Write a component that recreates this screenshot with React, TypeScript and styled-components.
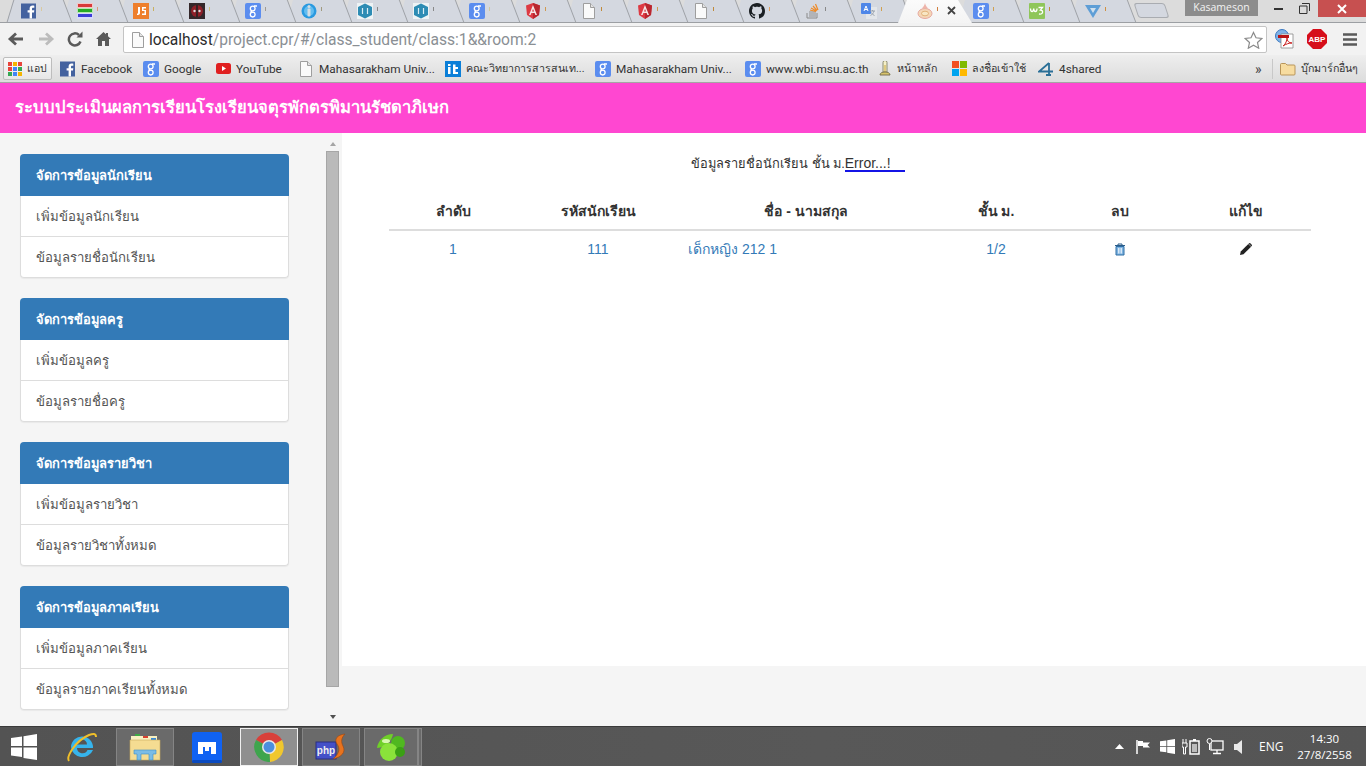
import React from "react";
import styled, { createGlobalStyle } from "styled-components";

const Global = createGlobalStyle`
  html, body { margin: 0; padding: 0; background: #fff; overflow: hidden; }
  * { box-sizing: border-box; }
  body { font-family: "Liberation Sans", "Noto Sans", "DejaVu Sans", sans-serif; }
`;

const Page = styled.div`
  width: 1366px; height: 766px; display: flex; flex-direction: column; overflow: hidden; position: relative;
`;

/* ---------- tab strip ---------- */
const TabRow = styled.div`
  height: 23px; flex: none; display: flex; padding-left: 7px; background: #dcdcdc;
  border-bottom: 1px solid #9c9fa3; position: relative;
`;
const Tab = styled.div<{ $active?: boolean }>`
  width: 56px; height: 23px; flex: none; position: relative; display: flex; align-items: flex-start; padding: 3px 0 0 14px;
  &::before {
    content: ""; position: absolute; left: ${p => (p.$active ? "-5px" : "0")}; top: 0; height: ${p => (p.$active ? "23px" : "22px")};
    width: ${p => (p.$active ? "74px" : "65px")};
    background: ${p => (p.$active ? "linear-gradient(#fbfbfb,#f4f4f4)" : "#d4d8e0")};
    clip-path: ${p => (p.$active ? "polygon(9px 0, 60px 0, 74px 100%, 0 100%)" : "polygon(6px 0, 56px 0, 65px 100%, 0 100%)")};
    z-index: ${p => (p.$active ? 3 : 0)};
  }
  &::after {
    content: ""; display: ${p => (p.$active ? "none" : "block")}; position: absolute; left: 60px; top: 0; width: 1px; height: 22px;
    background: #9ea1a6; transform: skewX(21deg); z-index: 2;
  }
`;
const TabFav = styled.span`
  width: 16px; height: 16px; display: flex; position: relative; z-index: 4; flex: none;
`;
const TabTick = styled.span<{ $c: string }>`
  width: 1px; height: 4px; margin: 4px 0 0 4px; background: ${p => p.$c}; position: relative; z-index: 4; flex: none;
`;
const TabClose = styled.span`
  position: absolute; left: 44px; top: 6px; z-index: 4; width: 9px; height: 9px; display: flex;
`;
const FirstSlant = styled.span`
  position: absolute; left: 10px; top: 0; width: 1px; height: 22px; background: #9ea1a6; transform: skewX(-17deg); z-index: 2;
`;
const NewTab = styled.div`
  width: 31px; height: 15px; margin: 3px 0 0 9px; flex: none; background: #d4d8e0; border: 1px solid #a9acb1; border-radius: 3px;
  transform: skewX(18deg); position: relative; z-index: 1;
`;
const WindowSpace = styled.div` flex: 1; `;
const UserBadge = styled.div`
  width: 73px; height: 16px; background: #8c8c8c; color: #f2f2f2; font: 10.5px/15px "Open Sans", sans-serif; text-align: center; flex: none;
`;
const WinBtn = styled.div<{ $w: number; $red?: boolean; $pr?: number }>`
  width: ${p => p.$w}px; height: 17px; padding-right: ${p => p.$pr ?? 0}px; background: ${p => (p.$red ? "#c75050" : "transparent")}; display: flex; align-items: center; justify-content: center; flex: none;
`;

/* ---------- toolbar ---------- */
const Toolbar = styled.div`
  height: 32px; flex: none; background: #f2f2f2; display: flex; align-items: center; position: relative;
`;
const NavBtn = styled.div<{ $w: number }>`
  width: ${p => p.$w}px; display: flex; justify-content: center; align-items: center; flex: none;
`;
const Omnibox = styled.div`
  width: 1144px; height: 27px; margin: 1px 0 0 7px; background: #fff; border: 1px solid #c4c4c4; border-radius: 2px; flex: none;
  display: flex; align-items: center; padding: 0 3px 0 6px; 
`;
const Url = styled.div`
  flex: 1; margin-left: 3px; font: 15.6px "Roboto", sans-serif; color: #8a8f94; white-space: nowrap;
  b { font-weight: 400; color: #2c2c2c; }
`;

/* ---------- bookmarks ---------- */
const Bookmarks = styled.div`
  height: 28px; flex: none; display: flex; align-items: center; padding-left: 3px; position: relative;
  background: linear-gradient(#eeeeee, #dcdcdc); border-bottom: 1px solid #a5a5a5; font: 11.8px "Roboto", "Noto Sans", sans-serif; color: #333;
`;
const AppsBtn = styled.div`
  width: 49px; height: 23px; border: 1px solid #bdbdbd; border-radius: 2px; background: linear-gradient(#fafafa,#e6e6e6);
  display: flex; align-items: center; gap: 5px; padding-left: 4px; flex: none; margin-right: 8px; font-size: 10.5px;
`;
const Mark = styled.div<{ $w: number; $thai?: boolean }>`
  width: ${p => p.$w}px; display: flex; align-items: center; gap: 5px; flex: none; white-space: nowrap; overflow: hidden;
  font-size: ${p => (p.$thai ? "10.7px" : "inherit")};
`;
const ChevronMore = styled.div`
  margin-left: auto; width: 16px; padding-left: 4px; font-size: 14px; color: #444; flex: none;
`;
const BarSep = styled.div` width: 1px; height: 20px; background: #c8c8c8; flex: none; margin: 0 7px 0 5px; `;

/* ---------- app bar ---------- */
const AppBar = styled.header`
  height: 50px; flex: none; background: #ff47d1; color: #fff; font-size: 16.6px; font-weight: 700; line-height: 50px; padding-left: 15px;
`;

/* ---------- body ---------- */
const Body = styled.div` flex: 1; display: flex; min-height: 0; `;
const Sidebar = styled.aside`
  width: 342px; flex: none; background: #f5f5f5; display: flex;
`;
const Panels = styled.div`
  width: 323px; flex: none; padding: 21px 34px 0 20px; display: flex; flex-direction: column; gap: 20px;
`;
const Panel = styled.section`
  width: 269px; border-radius: 4px; box-shadow: 0 1px 1px rgba(0,0,0,.05);
`;
const PanelHead = styled.div`
  height: 42px; background: #337ab7; color: #fff; font-size: 12.9px; font-weight: 700; line-height: 44px; padding-left: 16px; border-radius: 4px 4px 0 0;
`;
const PanelList = styled.div`
  border: 1px solid #ddd; border-top: 0; border-radius: 0 0 4px 4px; background: #fff;
`;
const PanelItem = styled.div`
  height: 40px; padding-left: 15px; font-size: 13.2px; line-height: 42px; color: #555;
  & + & { border-top: 1px solid #ddd; height: 41px; }
`;
const Scroll = styled.div`
  width: 19px; flex: none; display: flex; flex-direction: column; align-items: center;
`;
const ScrollArrowUp = styled.div`
  width: 0; height: 0; margin: 9px 0 5px; border-left: 3.5px solid transparent; border-right: 3.5px solid transparent; border-bottom: 4px solid #a5a5a5;
`;
const ScrollArrowDown = styled.div`
  width: 0; height: 0; margin: 28px 0 0; border-left: 3.5px solid transparent; border-right: 3.5px solid transparent; border-top: 4px solid #505050;
`;
const Thumb = styled.div`
  width: 13px; height: 536px; background: #bababa; border: 1px solid #a6a6a6; flex: none;
`;
const Main = styled.main` flex: 1; display: flex; flex-direction: column; background: #f5f5f5; `;
const Content = styled.div`
  height: 533px; flex: none; background: #fff; padding: 22px 55px 0 47px;
`;
const Title = styled.h4`
  margin: 0 0 28px; padding-left: 302px; font-size: 12.85px; font-weight: 400; line-height: 18px; color: #333; white-space: pre;
  u { font-size: 14px; text-decoration: none; border-bottom: 2px solid #1414e6; display: inline-block; width: 60px; line-height: 16px; height: 17px; }
`;
const Table = styled.table`
  width: 922px; border-collapse: collapse; table-layout: fixed; font-size: 14px; color: #337ab7;
`;
const Th = styled.th<{ $w: number }>`
  width: ${p => p.$w}px; height: 28px; padding: 0 0 8px; border-bottom: 2px solid #ddd; text-align: center; color: #333; font-size: 14px; font-weight: 700; line-height: 20px;
`;
const Td = styled.td<{ $left?: boolean }>`
  height: 37px; padding: 0 ${p => (p.$left ? "0 0 9px" : "0")}; text-align: ${p => (p.$left ? "left" : "center")}; vertical-align: middle;
  svg { display: block; margin: 0 auto; }
`;

/* ---------- taskbar ---------- */
const Taskbar = styled.footer`
  height: 40px; flex: none; background: linear-gradient(90deg, #535353, #585858 60%, #555); border-top: 1px solid #3a3a3a; display: flex; align-items: stretch; color: #fff;
`;
const TaskSlot = styled.div<{ $w: number; $ml?: number; $box?: boolean; $on?: boolean }>`
  width: ${p => p.$w}px; margin-left: ${p => p.$ml ?? 0}px; margin-top: 1px; flex: none; display: flex; align-items: center; justify-content: center;
  ${p => p.$box && `border: 1px solid ${p.$on ? "#f0f0f0" : "#858585"}; background: ${p.$on ? "#8f8f8f" : "#6a6a6a"};`}
`;
const Tray = styled.div`
  margin-left: auto; display: flex; align-items: center; font: 12px "Open Sans", sans-serif;
`;
const TrayIcon = styled.div<{ $w: number }>`
  width: ${p => p.$w}px; display: flex; justify-content: center; flex: none;
`;
const Clock = styled.div`
  width: 83px; text-align: center; line-height: 16px; font-size: 11.5px; flex: none;
`;
const Lang = styled.div` width: 24px; margin-left: 8px; text-align: center; flex: none; `;

/* ---------- icons ---------- */
const Fb = () => (<svg width="16" height="16" viewBox="0 0 16 16"><rect width="15" height="15" y=".5" fill="#44629f" /><path d="M11 15.5V9.6h2l.3-2.300H11V5.9c0-.7.3-1.100 1.100-1.100h1.200V2.700c-.5-.1-1-.1-1.700-.1-1.800 0-3 1-3 3v1.700h-2v2.300h2v5.900z" fill="#fff" /></svg>);
const G = () => (<svg width="16" height="16" viewBox="0 0 16 16"><rect width="16" height="16" rx="2" fill="#5b8def" /><g fill="none" stroke="#fff" strokeWidth="1.3"><circle cx="7.7" cy="5.500" r="2.400" /><circle cx="7.7" cy="11.6" r="2.400" /><path d="M9 3h3M7 8c-2 1-1 1.500 .7 1.300" /></g></svg>);
const Html5 = () => (<svg width="16" height="16" viewBox="0 0 16 16"><rect width="16" height="16" fill="#ee7f2d" /><path d="M5 4h2v6c0 1.500-1 2-3 2v-1.300c.7 0 1-.3 1-.9zM13 4H9v4h2.500v2.500H9V12h4V7h-2.500V5.500H13z" fill="#fff" /></svg>);
const MeaFree = () => (<svg width="16" height="16" viewBox="0 0 16 16"><rect width="16" height="5" fill="#f4c7c7" /><rect y="5" width="16" height="5" fill="#b8e8b0" /><rect y="10" width="16" height="6" fill="#d7d9fb" /><rect x="1" y="1" width="14" height="3" fill="#d83a3a" /><rect x="1" y="6" width="14" height="3" fill="#27a827" /><rect x="1" y="11" width="14" height="3" fill="#3d3dd8" /></svg>);
const Dead = () => (<svg width="16" height="16" viewBox="0 0 16 16"><rect width="16" height="16" fill="#33272a" /><circle cx="8" cy="8" r="6" fill="#8e1f28" /><path d="M8 2v12" stroke="#222" strokeWidth="1.6" /><circle cx="5.5" cy="8" r="1.2" fill="#ddd" /><circle cx="10.5" cy="8" r="1.2" fill="#ddd" /></svg>);
const InfoFav = () => (<svg width="16" height="16" viewBox="0 0 16 16"><circle cx="8" cy="8" r="7.5" fill="#2a9ae0" /><circle cx="8" cy="8" r="5" fill="#63bdf0" /><rect x="6.5" y="5.5" width="3" height="8" rx="1" fill="#d5dde2" /><circle cx="8" cy="3.5" r="1.5" fill="#d5dde2" /></svg>);
const Hex = () => (<svg width="16" height="16" viewBox="0 0 16 16"><rect width="16" height="16" fill="#eef3f5" /><path d="M8 .5 15 4v8l-7 3.500L1 12V4z" fill="#2d8cb4" /><path d="M5.5 5v6M10.5 5v6" stroke="#d9edf5" strokeWidth="1.2" /></svg>);
const Ang = () => (<svg width="16" height="16" viewBox="0 0 16 16"><path d="M8 0 15 2.500 14 12 8 16 2 12 1 2.500z" fill="#dd3a43" /><path d="M8 0 15 2.500 14 12 8 16z" fill="#b9272f" /><path d="M8 2 4 12h1.600l.8-2h3.200l.8 2H12zM7 8.500 8 6l1 2.500z" fill="#f6e4e4" /></svg>);
const Doc = () => (<svg width="16" height="16" viewBox="0 0 16 16"><path d="M2.500 .5h7l4 4v11h-11z" fill="#fafafa" stroke="#9e9e9e" /><path d="M9.500 .5v4h4" fill="#e4e4e4" stroke="#9e9e9e" /></svg>);
const Octo = () => (<svg width="16" height="16" viewBox="0 0 16 16"><path fill="#1b1f23" d="M8 0C3.580 0 0 3.580 0 8c0 3.540 2.290 6.530 5.470 7.590.4.070.55-.17.55-.38 0-.19-.01-.82-.01-1.490-2.010.37-2.530-.49-2.690-.94-.09-.23-.48-.94-.82-1.130-.28-.15-.68-.52-.01-.53.63-.01 1.080.58 1.230.82.720 1.210 1.870.870 2.330.660.070-.520.280-.870.510-1.070-1.780-.200-3.640-.890-3.640-3.950 0-.870.310-1.590.820-2.150-.080-.200-.360-1.020.080-2.120 0 0 .670-.210 2.200.820.640-.180 1.320-.270 2-.270s1.360.090 2 .270c1.530-1.040 2.200-.820 2.200-.820.440 1.100.160 1.920.080 2.120.510.560.820 1.270.820 2.150 0 3.070-1.870 3.750-3.650 3.950.290.250.540.730.540 1.480 0 1.070-.010 1.930-.010 2.200 0 .210.150.460.550.380A8.010 8.010 0 0 0 16 8c0-4.420-3.580-8-8-8z" /></svg>);
const Stack = () => (<svg width="16" height="16" viewBox="0 0 16 16"><path d="M2 10v5h10v-5" fill="none" stroke="#8a8a8a" /><path d="M4 9h7M4 11h7M4 13h7" stroke="#8f8f8f" /><path d="M5 7l6 1.500M6 5l5.500 3M8 3l4 4.500M10.500 1l2.500 6" stroke="#ef8a26" strokeWidth="1.2" /></svg>);
const Translate = () => (<svg width="16" height="16" viewBox="0 0 16 16"><rect x="5" y="4" width="11" height="12" fill="#e3e6ea" /><rect width="10" height="11" rx="1" fill="#4e86e8" /><path d="M3 8 5 3l2 5M3.800 6.500h2.400" stroke="#fff" fill="none" /><path d="M9 8h5M11.500 7v1M13 8c-.5 2-2 4-3.500 4.500M10.500 9.500c.5 1.500 2 2.500 3 3" stroke="#9aa2ad" fill="none" /></svg>);
const Onion = () => (<svg width="16" height="16" viewBox="0 0 16 16"><ellipse cx="8" cy="10.5" rx="7" ry="5" fill="#f4d6b6" stroke="#e6a8a0" /><ellipse cx="8" cy="10.5" rx="3.5" ry="2.3" fill="#f8e6c4" stroke="#d8a060" strokeWidth=".7" /><path d="M8 0c-.5 3-2 3.500-3 5.500h6C10 3.500 8.500 3 8 0z" fill="#eeb4aa" /></svg>);
const W3 = () => (<svg width="16" height="16" viewBox="0 0 16 16"><rect width="16" height="16" rx="1" fill="#8fc65a" /><path d="M1.500 5.500c0 4 3 4 3.200 0 .2 4 3.300 4 3.300 0M9.500 4.500h4l-2 2.500c3 0 3 5-1.500 4" fill="none" stroke="#fff" strokeWidth="1.3" /></svg>);
const Vee = () => (<svg width="16" height="16" viewBox="0 0 16 16"><path d="M0 2h16L8 15z" fill="#5e9ed6" /><path d="M5 5h6L8 10z" fill="#cfe0ee" /></svg>);
const YouT = () => (<svg width="15" height="11" viewBox="0 0 15 11"><rect width="15" height="11" rx="2.5" fill="#e02020" /><path d="M6 3l4 2.500L6 8z" fill="#fff" /></svg>);
const It = () => (<svg width="16" height="16" viewBox="0 0 16 16"><rect width="16" height="16" fill="#0b7fd8" /><path d="M3 6h2.500v7H3zM3 3h2.500v2H3zM8 3.500h2.500V6H13v2h-2.500v3H13v2H8z" fill="#fff" /></svg>);
const Lamp = () => (<svg width="14" height="16" viewBox="0 0 14 16"><path d="M5 1.500a2 2 0 0 1 4 0V11H5z" fill="#f5f0c8" stroke="#8a8a70" /><path d="M7 4v7" stroke="#c9a53a" /><path d="M2 14c0-2 2-3 5-3s5 1 5 3z" fill="#d8c36a" stroke="#7a7350" /></svg>);
const Ms = () => (<svg width="15" height="15" viewBox="0 0 15 15"><rect width="7" height="7" fill="#f25022" /><rect x="8" width="7" height="7" fill="#7fba00" /><rect y="8" width="7" height="7" fill="#00a4ef" /><rect x="8" y="8" width="7" height="7" fill="#ffb900" /></svg>);
const Four = () => (<svg width="16" height="14" viewBox="0 0 16 14"><path d="M11 1 1 9.500h14" fill="none" stroke="#2a6f97" strokeWidth="1.8" /><path d="M11 1v12M8 13h5" fill="none" stroke="#2a6f97" strokeWidth="1.8" /></svg>);
const Folder = () => (<svg width="16" height="14" viewBox="0 0 16 14"><path d="M.5 2.500a1 1 0 0 1 1-1h4l1.500 1.500h7a1 1 0 0 1 1 1v8a1 1 0 0 1-1 1h-12.500a1 1 0 0 1-1-1z" fill="#f7dca0" stroke="#b8955a" /></svg>);
const AppsGrid = () => (
  <svg width="14" height="14" viewBox="0 0 14 14">
    {[["#e8453c","#f4b400","#e8453c"],["#e8453c","#4285f4","#34a853"],["#34a853","#4285f4","#f4b400"]].map((row, y) =>
      row.map((c, x) => <rect key={`${x}${y}`} x={x * 5} y={y * 5} width="4" height="4" fill={c} />)
    )}
  </svg>
);
const Back = () => (<svg width="18" height="16" viewBox="0 0 18 16"><path d="M16 8H4M9 2.500 3 8l6 5.500" fill="none" stroke="#5a5a5a" strokeWidth="2.8" /></svg>);
const Forward = () => (<svg width="18" height="16" viewBox="0 0 18 16"><path d="M2 8h12M9 2.500 15 8l-6 5.500" fill="none" stroke="#bcbcbc" strokeWidth="2.8" /></svg>);
const Reload = () => (<svg width="16" height="16" viewBox="0 0 16 16"><path d="M13.500 10.500A6 6 0 1 1 12 4" fill="none" stroke="#5a5a5a" strokeWidth="2.5" /><path d="M9.500 6.500h6v-6z" fill="#5a5a5a" /></svg>);
const Home = () => (<svg width="15" height="14" viewBox="0 0 15 14"><path d="M7.500 0 0 7h2v7h4V9h3v5h4V7h2l-3-2.800V1h-2v1.300z" fill="#5a5a5a" /></svg>);
const Star = () => (<svg width="19" height="18" viewBox="0 0 19 18"><path d="M9.500 1.500 12 6.800l5.800.7-4.300 4 1.200 5.700-5.200-2.900-5.200 2.900 1.200-5.700-4.300-4 5.800-.7z" fill="#fff" stroke="#8a8a8a" strokeWidth="1.2" /></svg>);
const PdfIcon = () => (<svg width="20" height="20" viewBox="0 0 20 20"><circle cx="7" cy="7" r="6.5" fill="#7fb2e6" stroke="#3a78c0" /><path d="M6 5h12v14H6z" fill="#fff" stroke="#888" strokeWidth=".8" /><rect x="3" y="6" width="11" height="3" fill="#b81414" /><path d="M8 17c3-2 4-6 4-8 0 3 2 5 5 5-3 0-6 1-9 3z" fill="none" stroke="#c81e1e" /></svg>);
const Abp = () => (<svg width="20" height="20" viewBox="0 0 20 20"><path d="M6 0h8l6 6v8l-6 6H6l-6-6V6z" fill="#d60e1a" /><text x="10" y="13" textAnchor="middle" fontSize="8" fontWeight="700" fontFamily="Liberation Sans" fill="#fff">ABP</text></svg>);
const Menu = () => (<svg width="14" height="13" viewBox="0 0 14 13"><path d="M0 1.500h14M0 6.500h14M0 11.500h14" stroke="#5a5a5a" strokeWidth="2.4" /></svg>);
const Trash = () => (<svg width="12" height="13" viewBox="0 0 12 13"><path d="M1 2.500h10M4 2.500V1h4v1.500" fill="none" stroke="#2a5d8a" /><path d="M2 3.500h8v8.500H2z" fill="#7fb3e0" stroke="#2f6ea5" /><path d="M4.500 5v5.500M6 5v5.500M7.500 5v5.500" stroke="#fff" strokeWidth=".7" /></svg>);
const Pencil = () => (<svg width="12" height="12" viewBox="0 0 13 13"><path d="M0 13l.8-3.800L9 1l3 3-8.200 8.200z" fill="#222" /><path d="M9.800.2a1 1 0 0 1 1.400 0l1.600 1.600a1 1 0 0 1 0 1.400l-.6.6-3-3z" fill="#333" /></svg>);
const Win8 = ({ s = 26, c = "#fff" }: { s?: number; c?: string }) => (<svg width={s} height={s} viewBox="0 0 26 26"><path d="M0 4l11-1.500V12H0zM12.500 2.300 26 0v12H12.500zM0 13.500h11V23L0 21.500zM12.500 13.500H26V26l-13.500-2z" fill={c} /></svg>);
const Ie = () => (<svg width="32" height="32" viewBox="0 0 32 32"><path d="M5 16a11 11 0 0 1 22 1H11a5.500 5.500 0 0 0 10.500 2H27a11.500 11.500 0 0 1-22-3z" fill="#36b4ec" /><path d="M11 13.500h10a5 5 0 0 0-10 0z" fill="#555" /><path d="M3 30c-3-4 6-20 20-26 4-1.500 7-2 7 2" fill="none" stroke="#f0bf2a" strokeWidth="2" /></svg>);
const Explorer = () => (<svg width="32" height="30" viewBox="0 0 32 30"><path d="M2 4h26v4H2z" fill="#f8f0c0" /><rect x="6" y="2" width="5" height="2" fill="#3fa845" /><rect x="14" y="4" width="5" height="2" fill="#d84030" /><rect x="22" y="6" width="5" height="2" fill="#3a8ad8" /><path d="M1 8h30v20H1z" fill="#f5dc92" stroke="#c8a85a" strokeWidth=".6" /><path d="M5 18h22v4h-3v6h-4v-6h-8v6H8v-6H5z" fill="#7bbce6" stroke="#3d8fc8" strokeWidth=".6" /></svg>);
const Maxthon = () => (<svg width="30" height="31" viewBox="0 0 30 31"><rect width="30" height="31" rx="3" fill="#1062f2" /><rect y="28" width="30" height="3" rx="1.500" fill="#0a4ac0" /><path d="M6 22V10h18v12h-5v-7h-2v4h-4v-4h-2v7z" fill="#fff" /></svg>);
const Chrome = () => (<svg width="30" height="30" viewBox="0 0 30 30"><path d="M15 15 2 8A15 15 0 0 1 28 8z" fill="#d8403a" /><path d="M15 15 28 8A15 15 0 0 1 16 30z" fill="#f0c72e" /><path d="M15 15 16 30A15 15 0 0 1 2 8z" fill="#3ea54d" /><circle cx="15" cy="15" r="7" fill="#e8e8e8" /><circle cx="15" cy="15" r="5.5" fill="#4b8fde" /></svg>);
const PhpS = () => (<svg width="32" height="30" viewBox="0 0 32 30"><rect x="1" y="10" width="20" height="17" fill="#4450c8" stroke="#2a2f80" /><text x="11" y="22" textAnchor="middle" fontFamily="Liberation Sans" fontWeight="700" fontSize="10" fill="#eee">php</text><path d="M30 2c-8 1-11 5-8 10 3 4 3 9-4 15 9-2 13-7 10-13-2-4-2-8 2-12z" fill="#e8731e" stroke="#9a4510" strokeWidth=".6" /></svg>);
const GreenApp = () => (<svg width="32" height="28" viewBox="0 0 32 28"><path d="M2 15C3 7 10 1 18 1c-1 7-7 13-16 14z" fill="#6fd028" /><circle cx="23" cy="10" r="7" fill="#50b820" /><circle cx="14" cy="19" r="9" fill="#8ae23a" /><circle cx="25" cy="19" r="5" fill="#3aa014" /><ellipse cx="11" cy="8" rx="4" ry="2" fill="#d8f7b0" /></svg>);
const Caret = () => (<svg width="9" height="5" viewBox="0 0 9 5"><path d="M0 5 4.500 0 9 5z" fill="#fff" /></svg>);
const Flag = () => (<svg width="16" height="16" viewBox="0 0 16 16"><path d="M2 1v14" stroke="#fff" strokeWidth="1.5" /><path d="M3 2h5v1.500h7L12.500 6 15 8.500H8V7H3z" fill="#fff" /></svg>);
const Battery = () => (<svg width="18" height="17" viewBox="0 0 18 17"><path d="M1 5V1M4 5V1M0 5h5v4H3.500v7h-2V9H0z" fill="none" stroke="#fff" /><rect x="8" y="3" width="9" height="13" fill="none" stroke="#fff" strokeWidth="1.5" /><rect x="11" y="1" width="3" height="2" fill="#fff" /><rect x="10" y="6" width="5" height="8" fill="#fff" opacity=".6" /></svg>);
const Net = () => (<svg width="18" height="17" viewBox="0 0 18 17"><rect x="5" y="3" width="12" height="9" fill="none" stroke="#fff" strokeWidth="1.3" /><path d="M11 12v3M7 15.500h8" stroke="#fff" strokeWidth="1.3" /><circle cx="3.5" cy="3" r="2.5" fill="#555" stroke="#fff" /><path d="M3.500 6v6" stroke="#fff" /></svg>);
const Speaker = () => (<svg width="10" height="14" viewBox="0 0 10 14"><path d="M0 4h3l5-4v14l-5-4H0z" fill="#e8e8e8" /></svg>);

const tabs: [React.ReactNode, string][] = [
  [<Fb />, "#d9c9a0"], [<MeaFree />, "#d99a7a"], [<Html5 />, "#c9b060"], [<Dead />, "#d0c080"], [<G />, "#a09a90"],
  [<InfoFav />, "#a09a80"], [<Hex />, "#888"], [<Hex />, "#888"], [<G />, "#d0c8a0"], [<Ang />, "#d09a50"],
  [<Doc />, "#c08a3a"], [<Ang />, "#d09a50"], [<Doc />, "#c08a3a"], [<Octo />, "#e0a060"], [<Stack />, "#888"], [<Translate />, "#d0a050"],
];
const laterTabs: [React.ReactNode, string][] = [[<G />, "#d0a050"], [<W3 />, "#c09030"], [<Vee />, "#d09040"]];

const panels = [
  ["จัดการข้อมูลนักเรียน", "เพิ่มข้อมูลนักเรียน", "ข้อมูลรายชื่อนักเรียน"],
  ["จัดการข้อมูลครู", "เพิ่มข้อมูลครู", "ข้อมูลรายชื่อครู"],
  ["จัดการข้อมูลรายวิชา", "เพิ่มข้อมูลรายวิชา", "ข้อมูลรายวิชาทั้งหมด"],
  ["จัดการข้อมูลภาคเรียน", "เพิ่มข้อมูลภาคเรียน", "ข้อมูลรายภาคเรียนทั้งหมด"],
];

export default function App() {
  return (
    <Page>
      <Global />
      <TabRow>
        <FirstSlant />
        {tabs.map(([icon, c], i) => (
          <Tab key={i}><TabFav>{icon}</TabFav><TabTick $c={c} /></Tab>
        ))}
        <Tab $active>
          <TabFav><Onion /></TabFav><TabTick $c="#d08040" />
          <TabClose><svg width="9" height="9" viewBox="0 0 9 9"><path d="M1 1l7 7M8 1 1 8" stroke="#444" strokeWidth="1.8" /></svg></TabClose>
        </Tab>
        {laterTabs.map(([icon, c], i) => (
          <Tab key={i}><TabFav>{icon}</TabFav><TabTick $c={c} /></Tab>
        ))}
        <NewTab />
        <WindowSpace />
        <UserBadge>Kasameson</UserBadge>
        <WinBtn $w={40}><svg width="9" height="3"><rect width="9" height="2" y="1" fill="#333" /></svg></WinBtn>
        <WinBtn $w={20} $pr={8}><svg width="11" height="11" viewBox="0 0 11 11"><path d="M3 .5h7.500V8M.5 3h7.500v7.500H.5z" fill="none" stroke="#333" /></svg></WinBtn>
        <WinBtn $w={48} $red><svg width="10" height="10" viewBox="0 0 10 10"><path d="M1 1l8 8M9 1 1 9" stroke="#fff" strokeWidth="2" /></svg></WinBtn>
      </TabRow>
      <Toolbar>
        <NavBtn $w={32}><Back /></NavBtn>
        <NavBtn $w={28}><Forward /></NavBtn>
        <NavBtn $w={30}><Reload /></NavBtn>
        <NavBtn $w={26}><Home /></NavBtn>
        <Omnibox>
          <Doc />
          <Url><b>localhost</b>/project.cpr/#/class_student/class:1&amp;&amp;room:2</Url>
          <Star />
        </Omnibox>
        <NavBtn $w={35}><PdfIcon /></NavBtn>
        <NavBtn $w={30}><Abp /></NavBtn>
        <NavBtn $w={36}><Menu /></NavBtn>
      </Toolbar>
      <Bookmarks>
        <AppsBtn><AppsGrid /><span>แอป</span></AppsBtn>
        <Mark $w={83}><Fb />Facebook</Mark>
        <Mark $w={73}><G />Google</Mark>
        <Mark $w={82}><YouT />YouTube</Mark>
        <Mark $w={147}><Doc />Mahasarakham Univ...</Mark>
        <Mark $w={150} $thai><It />คณะวิทยาการสารสนเท...</Mark>
        <Mark $w={150}><G />Mahasarakham Univ...</Mark>
        <Mark $w={133}><G />www.wbi.msu.ac.th</Mark>
        <Mark $w={74} $thai><Lamp />หน้าหลัก</Mark>
        <Mark $w={86} $thai><Ms />ลงชื่อเข้าใช้</Mark>
        <Mark $w={72}><Four />4shared</Mark>
        <ChevronMore>»</ChevronMore>
        <BarSep />
        <Mark $w={86} $thai><Folder />บุ๊กมาร์กอื่นๆ</Mark>
      </Bookmarks>
      <AppBar>ระบบประเมินผลการเรียนโรงเรียนจตุรพักตรพิมานรัชดาภิเษก</AppBar>
      <Body>
        <Sidebar>
          <Panels>
            {panels.map(([h, a, b]) => (
              <Panel key={h}>
                <PanelHead>{h}</PanelHead>
                <PanelList>
                  <PanelItem>{a}</PanelItem>
                  <PanelItem>{b}</PanelItem>
                </PanelList>
              </Panel>
            ))}
          </Panels>
          <Scroll>
            <ScrollArrowUp />
            <Thumb />
            <ScrollArrowDown />
          </Scroll>
        </Sidebar>
        <Main>
          <Content>
            <Title>ข้อมูลรายชื่อนักเรียน ชั้น ม.<u>Error...!</u></Title>
            <Table>
              <thead>
                <tr>
                  <Th $w={128}>ลำดับ</Th>
                  <Th $w={162}>รหัสนักเรียน</Th>
                  <Th $w={254}>ชื่อ - นามสกุล</Th>
                  <Th $w={126}>ชั้น ม.</Th>
                  <Th $w={122}>ลบ</Th>
                  <Th $w={130}>แก้ไข</Th>
                </tr>
              </thead>
              <tbody>
                <tr>
                  <Td>1</Td>
                  <Td>111</Td>
                  <Td $left>เด็กหญิง 212 1</Td>
                  <Td>1/2</Td>
                  <Td><Trash /></Td>
                  <Td><Pencil /></Td>
                </tr>
              </tbody>
            </Table>
          </Content>
        </Main>
      </Body>
      <Taskbar>
        <TaskSlot $w={48}><Win8 /></TaskSlot>
        <TaskSlot $w={68}><Ie /></TaskSlot>
        <TaskSlot $w={58} $box><Explorer /></TaskSlot>
        <TaskSlot $w={66}><Maxthon /></TaskSlot>
        <TaskSlot $w={58} $box $on><Chrome /></TaskSlot>
        <TaskSlot $w={58} $ml={4} $box><PhpS /></TaskSlot>
        <TaskSlot $w={54} $ml={4} $box><GreenApp /></TaskSlot>
        <TaskSlot $w={4} $box />
        <Tray>
          <TrayIcon $w={24}><Caret /></TrayIcon>
          <TrayIcon $w={24}><Flag /></TrayIcon>
          <TrayIcon $w={24}><Win8 s={15} /></TrayIcon>
          <TrayIcon $w={24}><Battery /></TrayIcon>
          <TrayIcon $w={24}><Net /></TrayIcon>
          <TrayIcon $w={24}><Speaker /></TrayIcon>
          <Lang>ENG</Lang>
          <Clock>14:30<br />27/8/2558</Clock>
        </Tray>
      </Taskbar>
    </Page>
  );
}
